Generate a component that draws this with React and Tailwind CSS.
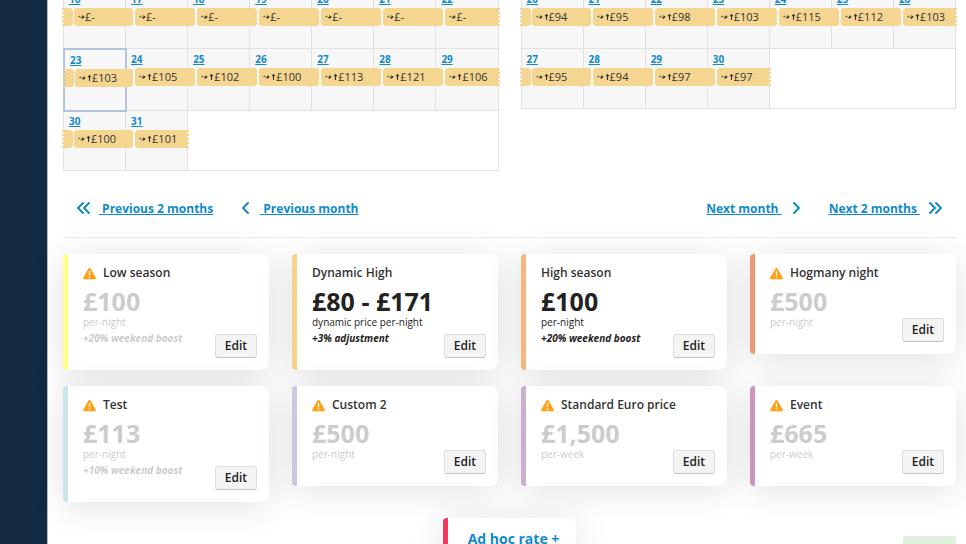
import clsx from 'clsx'

const march = [
  [
    { day: 16, price: '£-' },
    { day: 17, price: '£-' },
    { day: 18, price: '£-' },
    { day: 19, price: '£-' },
    { day: 20, price: '£-' },
    { day: 21, price: '£-' },
    { day: 22, price: '£-' },
  ],
  [
    { day: 23, price: '£103', up: true, today: true },
    { day: 24, price: '£105', up: true },
    { day: 25, price: '£102', up: true },
    { day: 26, price: '£100', up: true },
    { day: 27, price: '£113', up: true },
    { day: 28, price: '£121', up: true },
    { day: 29, price: '£106', up: true },
  ],
  [
    { day: 30, price: '£100', up: true },
    { day: 31, price: '£101', up: true },
  ],
]

const april = [
  [
    { day: 20, price: '£94', up: true },
    { day: 21, price: '£95', up: true },
    { day: 22, price: '£98', up: true },
    { day: 23, price: '£103', up: true },
    { day: 24, price: '£115', up: true },
    { day: 25, price: '£112', up: true },
    { day: 26, price: '£103', up: true },
  ],
  [
    { day: 27, price: '£95', up: true },
    { day: 28, price: '£94', up: true },
    { day: 29, price: '£97', up: true },
    { day: 30, price: '£97', up: true },
  ],
]

const rates = [
  { name: 'Low season', price: '£100', unit: 'per-night', note: '+20% weekend boost', warn: true, color: 'border-l-[#ffff8c]' },
  { name: 'Dynamic High', price: '£80 - £171', unit: 'dynamic price per-night', note: '+3% adjustment', color: 'border-l-[#f5d48a]' },
  { name: 'High season', price: '£100', unit: 'per-night', note: '+20% weekend boost', color: 'border-l-[#f2b880]' },
  { name: 'Hogmany night', price: '£500', unit: 'per-night', warn: true, color: 'border-l-[#ee9a78]' },
  { name: 'Test', price: '£113', unit: 'per-night', note: '+10% weekend boost', warn: true, color: 'border-l-[#c9e7ec]' },
  { name: 'Custom 2', price: '£500', unit: 'per-night', warn: true, color: 'border-l-[#cbc9dc]' },
  { name: 'Standard Euro price', price: '£1,500', unit: 'per-week', warn: true, color: 'border-l-[#cbaed0]' },
  { name: 'Event', price: '£665', unit: 'per-week', warn: true, color: 'border-l-[#cb95bd]' },
]

function Wave() {
  return (
    <svg className="w-[7px] h-[6px] shrink-0" viewBox="0 0 14 12" fill="none" stroke="currentColor" strokeWidth="2">
      <path d="M0.5 6.500C2 4 3.500 4 5 6s3 2 4.500 0H11" />
      <path d="M8.500 2L13.500 6l-5 4z" fill="currentColor" stroke="none" />
    </svg>
  )
}

function Day({ cell, first, last }) {
  return (
    <td
      className={clsx(
        'p-0 align-top bg-[#f7f7f7] border border-[#e2e2e2]',
        cell.today ? 'relative h-[62px] pt-px pl-px outline-2 -outline-offset-1 outline-[#b0c4de]' : 'h-[60px]'
      )}
    >
      <a href="#" className="block w-fit mt-[3px] ml-[5px] text-[10px] leading-[14px] font-bold text-[#0f8acb] underline">
        {cell.day}
      </a>
      <div className="relative flex gap-px mt-[2px] h-[18px]">
        {first && (
          <span className="w-[11px] -ml-[2px] shrink-0 rounded-r-[3px] bg-[#f5d690] bg-clip-padding border-l-2 border-dotted border-[#f5d690]" />
        )}
        <span
          className={clsx(
            'flex-1 flex items-center pl-1 rounded-l-[3px] bg-[#f5d690] text-[11px] leading-[18px] text-[#333] whitespace-nowrap',
            !first && 'ml-[9px]',
            last ? '-mr-[2px] border-r-2 border-dotted border-[#f5d690] bg-clip-padding' : '-mr-[8px] rounded-r-[3px]'
          )}
        >
          <Wave />
          {cell.up && (
            <svg className="w-[5px] h-[8px] ml-px shrink-0" viewBox="0 0 10 16" fill="none" stroke="currentColor" strokeWidth="2.200">
              <path d="M5 14V3M2 6.500L5 3l3 3.500" />
            </svg>
          )}
          {cell.price}
        </span>
      </div>
    </td>
  )
}

function Month({ weeks }) {
  return (
    <table className="w-full table-fixed border-collapse border border-[#e2e2e2]">
      <tbody>
        {weeks.map((week, i) => (
          <tr key={i}>
            {week.map((cell, j) => (
              <Day key={cell.day} cell={cell} first={j === 0} last={j === week.length - 1} />
            ))}
            {week.length < 7 && <td colSpan={7 - week.length} className="border border-[#e2e2e2]" />}
          </tr>
        ))}
      </tbody>
    </table>
  )
}

function Chevron({ double, flip }) {
  return (
    <svg
      className={clsx('h-[14px] shrink-0 -translate-y-px', double ? 'w-[15px]' : 'w-[9px]', flip && 'scale-x-[-1]')}
      viewBox={double ? '0 0 15 14' : '0 0 9 14'}
      fill="none"
      stroke="currentColor"
      strokeWidth="2"
      strokeLinecap="round"
      strokeLinejoin="round"
    >
      <path d="M7 2L2 7l5 5" />
      {double && <path d="M13 2L8 7l5 5" />}
    </svg>
  )
}

function Warning() {
  return (
    <svg className="w-[13px] h-[13px] mr-[7px] shrink-0" viewBox="0 0 24 24">
      <path d="M12 1.500c.8 0 1.400.4 1.800 1.100l9.600 17c.8 1.400-.2 3-1.800 3H2.400c-1.600 0-2.600-1.600-1.800-3l9.600-17c.4-.7 1-1.100 1.800-1.100z" fill="#ffa015" />
      <path d="M12 8.500v6" stroke="#fff" strokeWidth="2.400" strokeLinecap="round" />
      <circle cx="12" cy="18.500" r="1.500" fill="#fff" />
    </svg>
  )
}

function RateCard({ rate }) {
  return (
    <div
      className={clsx(
        'relative bg-white rounded-l-[4px] rounded-r-lg border-l-[5px] shadow-[0_4px_36px_rgba(0,0,0,0.12)] pl-[15px] pr-3 pt-[11px] pb-3',
        rate.note ? 'min-h-[116px]' : 'min-h-[100px]',
        rate.color
      )}
    >
      <h3 className="flex items-center text-[12px] leading-4 font-semibold text-[#333]">
        {rate.warn && <Warning />}
        {rate.name}
      </h3>
      <div className={rate.warn ? 'text-[#ccc]' : 'text-[#222]'}>
        <p className="mt-[6px] text-[25px] leading-[28px] font-bold">{rate.price}</p>
        <p className="text-[10px] leading-[14px]">{rate.unit}</p>
        {rate.note && <p className="text-[10px] leading-[18px] font-bold italic">{rate.note}</p>}
      </div>
      <button className="absolute right-3 bottom-3 w-[42px] h-6 rounded-[3px] border border-[#ddd] border-b-[#c4c4c4] bg-[#f4f4f4] text-[12px] leading-4 font-semibold text-[#222]">
        Edit
      </button>
    </div>
  )
}

export default function App() {
  return (
    <div className="h-screen overflow-hidden flex bg-white font-['Open_Sans','Noto_Sans',sans-serif]">
      <aside className="w-[47px] shrink-0 bg-[#122a42]" />

      <main className="flex-1 min-w-0 pl-[15px] pr-[10px] border-l border-[#b5bcc4]">
        {/* Calendars, scrolled part way past the top */}
        <div className="grid grid-cols-2 items-start gap-[22px] -mt-3">
          <Month weeks={march} />
          <Month weeks={april} />
        </div>

        {/* Month navigation */}
        <nav className="flex items-center justify-between mt-[29px] px-[13px] h-[18px] text-[12px] leading-[18px] font-bold text-[#0f8acb]">
          <div className="flex gap-7">
            <a href="#" className="flex items-center gap-2">
              <Chevron double />
              <span className="underline whitespace-pre"> Previous 2 months</span>
            </a>
            <a href="#" className="flex items-center gap-[10px]">
              <Chevron />
              <span className="underline whitespace-pre"> Previous month</span>
            </a>
          </div>
          <div className="flex gap-7">
            <a href="#" className="flex items-center gap-[10px]">
              <span className="underline whitespace-pre">Next month </span>
              <Chevron flip />
            </a>
            <a href="#" className="flex items-center gap-2">
              <span className="underline whitespace-pre">Next 2 months </span>
              <Chevron double flip />
            </a>
          </div>
        </nav>

        <hr className="mt-[19px] mb-4 border-[#ececec]" />

        {/* Rates */}
        <div className="grid grid-cols-4 items-start gap-x-[23px] gap-y-4">
          {rates.map(rate => <RateCard key={rate.name} rate={rate} />)}
        </div>

        <div className="flex justify-center mt-4">
          <button className="h-[42px] px-5 pr-[17px] rounded-l-[4px] rounded-r-lg border-l-[5px] border-l-[#f5365c] bg-white shadow-[0_4px_36px_rgba(0,0,0,0.12)] text-[14px] leading-5 font-bold text-[#0f8acb]">
            Ad hoc rate +
          </button>
        </div>
        <div className="ml-auto -mt-6 w-[53px] h-8 rounded-[3px] bg-[#dff0dc]" />
      </main>
    </div>
  )
}
